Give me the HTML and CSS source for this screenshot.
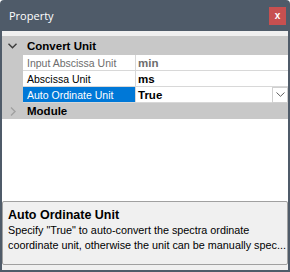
FILE: index.html
```html
<!DOCTYPE html>
<html lang="en">
<head>
  <meta charset="UTF-8" />
  <title>Property</title>
  <link rel="stylesheet" href="styles.css">
</head>
<body>
  <div class="window">
    <div class="titlebar">
      <span class="title">Property</span>
      <button class="close">x</button>
    </div>

    <div class="panel">
      <div class="strip"></div>

      <div class="grid">
        <div class="cat cat-open">
          <span class="gutter">
            <svg width="9" height="6" viewBox="0 0 9 6"><polyline points="0.5,0.8 4.5,4.8 8.5,0.8" fill="none" stroke="#3c3c3c" stroke-width="1.4"/></svg>
          </span>
          <span class="cat-name">Convert Unit</span>
        </div>

        <div class="row readonly">
          <span class="gutter"></span>
          <span class="name">Input Abscissa Unit</span>
          <span class="value">min</span>
        </div>
        <div class="row">
          <span class="gutter"></span>
          <span class="name">Abscissa Unit</span>
          <span class="value">ms</span>
        </div>
        <div class="row selected">
          <span class="gutter"></span>
          <span class="name">Auto Ordinate Unit</span>
          <span class="value">True
            <span class="drop">
              <svg width="9" height="5" viewBox="0 0 9 5"><polyline points="0.5,0.5 4.5,4.3 8.5,0.5" fill="none" stroke="#606060" stroke-width="1"/></svg>
            </span>
          </span>
        </div>

        <div class="cat">
          <span class="gutter">
            <svg width="6" height="9" viewBox="0 0 6 9"><polyline points="1,0.5 5,4.5 1,8.5" fill="none" stroke="#a0a0a0" stroke-width="1.4"/></svg>
          </span>
          <span class="cat-name">Module</span>
        </div>
      </div>

      <div class="help">
        <div class="help-title">Auto Ordinate Unit</div>
        <div class="help-text">Specify "True" to auto-convert the spectra ordinate<br>coordinate unit, otherwise the unit can be manually spec...</div>
      </div>
    </div>
  </div>
</body>
</html>
```

FILE: styles.css
```css
body {
  margin: 0;
  font-family: "Liberation Sans", Arial, sans-serif;
  background-color: #fff;
}
.window {
  width: 290px;
  height: 272px;
  background-color: #4f5b69;
  border-radius: 4px 4px 0 0;
  display: flex;
  flex-direction: column;
}
.titlebar {
  height: 31px;
  display: flex;
  align-items: center;
  justify-content: space-between;
  padding: 0 4px 0 9px;
}
.title {
  font-family: "Open Sans", sans-serif;
  font-size: 11px;
  color: #fff;
}
.close {
  width: 17px;
  height: 18px;
  border: none;
  padding: 0;
  background-color: #c75050;
  color: #fff;
  font-family: "Liberation Sans", sans-serif;
  font-weight: bold;
  font-size: 10px;
  line-height: 18px;
}
.panel {
  flex: 1;
  margin: 0 2px 2px;
  background-color: #f0f0f0;
  display: flex;
  flex-direction: column;
}
.strip {
  height: 5px;
}
.grid {
  flex: 1;
  background-color: #fff;
  display: flex;
  flex-direction: column;
  font-size: 10.5px;
  color: #000;
}
.gutter {
  width: 21px;
  flex: none;
  background-color: #c8c8c8;
  display: flex;
  align-items: center;
  justify-content: center;
}
.cat {
  height: 16px;
  display: flex;
  background-color: #c8c8c8;
}
.cat-open {
  height: 19px;
}
.cat-name {
  padding-left: 4px;
  font-weight: bold;
  font-size: 11.5px;
  display: flex;
  align-items: center;
}
.row {
  height: 16px;
  display: flex;
}
.row .name {
  width: 108px;
  padding-left: 4px;
  border-right: 1px solid #d8d8d8;
  border-bottom: 1px solid #d8d8d8;
  display: flex;
  align-items: center;
}
.row .value {
  flex: 1;
  padding-left: 2px;
  border-bottom: 1px solid #d8d8d8;
  font-weight: bold;
  font-size: 11.5px;
  display: flex;
  align-items: center;
}
.readonly .name,
.readonly .value {
  color: #6d6d6d;
}
.selected .name {
  background-color: #0078d7;
  color: #fff;
}
.drop {
  margin-left: auto;
  width: 14px;
  height: 14px;
  border: 1px solid #d0d0d0;
  background-color: #fff;
  display: flex;
  align-items: center;
  justify-content: center;
}
.help {
  height: 64px;
  margin-bottom: 5px;
  border: 1px solid #a0a0a0;
  border-radius: 2px;
  padding: 6px 5px 0;
  box-sizing: border-box;
}
.help-title {
  font-weight: bold;
  font-size: 12.5px;
  line-height: 15px;
}
.help-text {
  font-size: 10.8px;
  line-height: 15px;
  white-space: nowrap;
}
```
